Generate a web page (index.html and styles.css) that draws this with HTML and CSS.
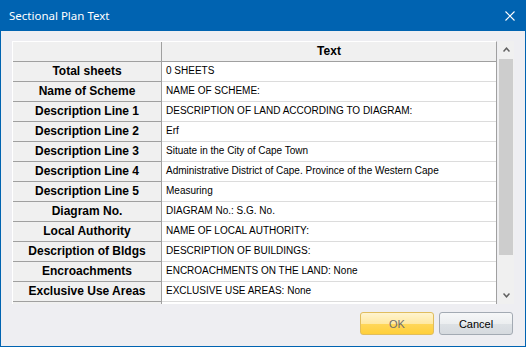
FILE: index.html
```html
<!DOCTYPE html>
<html lang="en">
<head>
    <meta charset="UTF-8">
    <title>Sectional Plan Text</title>
    <link rel="stylesheet" href="styles.css">
</head>
<body>
    <div class="window">
        <div class="titlebar">
            <span class="title">Sectional Plan Text</span>
            <svg class="close" width="10" height="10" viewBox="0 0 10 10">
                <path d="M0.5 0.5L9.5 9.5M9.5 0.5L0.5 9.5" stroke="#fff" stroke-width="1.1" fill="none"/>
            </svg>
        </div>
        <div class="content">
            <div class="gridbox">
                <div class="grid">
                    <div class="row head"><div class="key"></div><div class="val">Text</div></div>
                    <div class="row"><div class="key">Total sheets</div><div class="val">0 SHEETS</div></div>
                    <div class="row"><div class="key">Name of Scheme</div><div class="val">NAME OF SCHEME:</div></div>
                    <div class="row"><div class="key">Description Line 1</div><div class="val">DESCRIPTION OF LAND ACCORDING TO DIAGRAM:</div></div>
                    <div class="row"><div class="key">Description Line 2</div><div class="val">Erf</div></div>
                    <div class="row"><div class="key">Description Line 3</div><div class="val">Situate in the City of Cape Town</div></div>
                    <div class="row"><div class="key">Description Line 4</div><div class="val">Administrative District of Cape. Province of the Western Cape</div></div>
                    <div class="row"><div class="key">Description Line 5</div><div class="val">Measuring</div></div>
                    <div class="row"><div class="key">Diagram No.</div><div class="val">DIAGRAM No.: S.G. No.</div></div>
                    <div class="row"><div class="key">Local Authority</div><div class="val">NAME OF LOCAL AUTHORITY:</div></div>
                    <div class="row"><div class="key">Description of Bldgs</div><div class="val">DESCRIPTION OF BUILDINGS:</div></div>
                    <div class="row"><div class="key">Encroachments</div><div class="val">ENCROACHMENTS ON THE LAND: None</div></div>
                    <div class="row"><div class="key">Exclusive Use Areas</div><div class="val">EXCLUSIVE USE AREAS: None</div></div>
                    <div class="row"><div class="key"></div><div class="val"></div></div>
                </div>
                <div class="scroll">
                    <div class="sb-btn">
                        <svg width="7" height="5" viewBox="0 0 7 5"><polyline points="0.5,4.5 3.5,1.2 6.5,4.5" fill="none" stroke="#606060" stroke-width="1.5"/></svg>
                    </div>
                    <div class="sb-track"><div class="thumb"></div></div>
                    <div class="sb-btn">
                        <svg width="7" height="5" viewBox="0 0 7 5"><polyline points="0.5,0.5 3.5,3.8 6.5,0.5" fill="none" stroke="#606060" stroke-width="1.5"/></svg>
                    </div>
                </div>
            </div>
            <div class="buttons">
                <button class="btn ok">OK</button>
                <button class="btn">Cancel</button>
            </div>
        </div>
    </div>
</body>
</html>
```

FILE: styles.css
```css
*{
    margin:0;
    padding:0;
    box-sizing:border-box;
}
body{
    width:526px;
    height:347px;
    overflow:hidden;
    font-family:"Liberation Sans", Arial, sans-serif;
    color:#000;
}
.window{
    width:526px;
    height:347px;
    display:flex;
    flex-direction:column;
    background:#eeeef2;
}
.titlebar{
    height:31px;
    background:#0063b1;
    color:#fff;
    display:flex;
    align-items:center;
    justify-content:space-between;
    padding:0 11px 0 9px;
}
.title{
    font-family:"Noto Sans", "Liberation Sans", sans-serif;
    font-size:11.5px;
}
.close{
    display:block;
}
.content{
    flex:1;
    border:1px solid #0063b1;
    border-top:0;
    padding:10px 11px 0 11px;
    display:flex;
    flex-direction:column;
}
.gridbox{
    height:263px;
    display:flex;
    gap:1px;
}
.grid{
    flex:1;
    overflow:hidden;
    background:#fff;
    border-top:1px solid #fff;
    border-left:1px solid #fff;
    border-right:1px solid #a0a0a0;
}
.row{
    display:flex;
    height:20px;
    flex-shrink:0;
}
.key{
    width:149px;
    flex-shrink:0;
    background:#f0f0f0;
    border-right:1px solid #a0a0a0;
    border-bottom:1px solid #a0a0a0;
    font-weight:bold;
    font-size:12px;
    line-height:19px;
    text-align:center;
    white-space:nowrap;
}
.val{
    flex:1;
    border-bottom:1px solid #dcdcdc;
    padding-left:4px;
    font-size:10px;
    line-height:18px;
    white-space:nowrap;
    overflow:hidden;
}
.head .val{
    background:#f0f0f0;
    border-bottom-color:#a0a0a0;
    font-weight:bold;
    font-size:12px;
    line-height:19px;
    text-align:center;
    padding-left:0;
}
.scroll{
    width:16px;
    background:#f0f0f0;
    display:flex;
    flex-direction:column;
}
.sb-btn{
    height:17px;
    display:flex;
    align-items:center;
    justify-content:center;
}
.sb-btn svg{
    display:block;
}
.sb-track{
    flex:1;
    padding:1px 1px 0 1px;
}
.thumb{
    height:196px;
    background:#cdcdcd;
}
.buttons{
    display:flex;
    justify-content:flex-end;
    gap:5px;
    margin-top:8px;
    padding-right:1px;
}
.btn{
    width:74px;
    height:23px;
    font-family:"Liberation Sans", Arial, sans-serif;
    font-size:11px;
    border:1px solid #a3aab3;
    border-radius:3px;
    background:linear-gradient(#f6f7f8, #eceef0 50%, #dde1e5 51%, #d6dadf);
    color:#000;
}
.btn.ok{
    border-color:#e0bd5e;
    background:linear-gradient(#fff4cf, #ffe9a3 50%, #ffd75a 51%, #ffcf3a);
    color:#6e6e6e;
}
```
